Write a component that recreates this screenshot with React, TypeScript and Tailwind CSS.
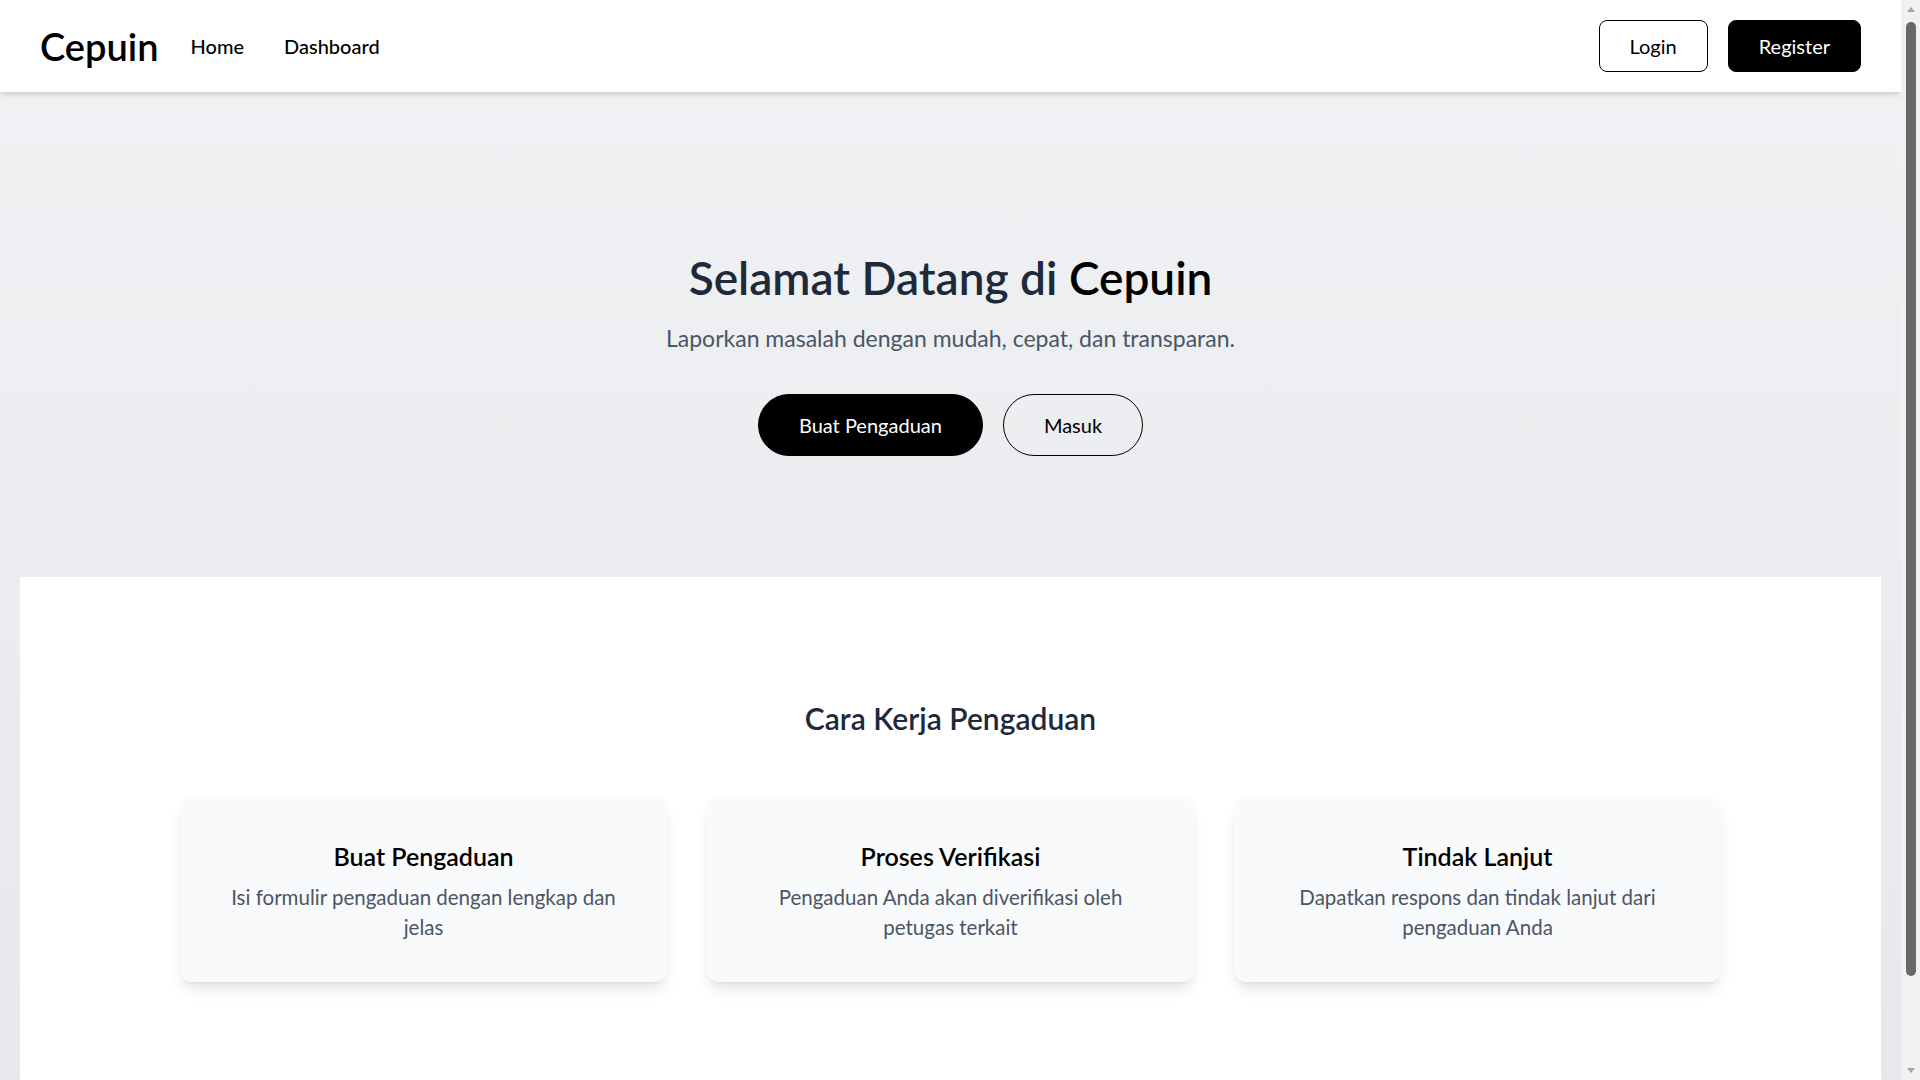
const steps = [
  {
    title: "Buat Pengaduan",
    desc: "Isi formulir pengaduan dengan lengkap dan jelas",
  },
  {
    title: "Proses Verifikasi",
    desc: "Pengaduan Anda akan diverifikasi oleh petugas terkait",
  },
  {
    title: "Tindak Lanjut",
    desc: "Dapatkan respons dan tindak lanjut dari pengaduan Anda",
  },
];

function Navbar() {
  return (
    <nav className="relative z-10 h-[92px] bg-white shadow-md flex items-center justify-between pl-10 pr-10">
      <div className="flex items-center">
        <span className="text-[38px] font-semibold text-black">Cepuin</span>
        <div className="ml-8 flex items-center gap-10 text-xl font-medium text-black">
          <a href="#">Home</a>
          <a href="#">Dashboard</a>
        </div>
      </div>
      <div className="flex items-center gap-5">
        <button className="border border-black rounded-lg px-[30px] py-[11px] text-xl text-black bg-white">
          Login
        </button>
        <button className="border border-black rounded-lg px-[30px] py-[11px] text-xl text-white bg-black">
          Register
        </button>
      </div>
    </nav>
  );
}

// stand-in for the browser's vertical scrollbar seen in the screenshot
function Scrollbar() {
  return (
    <div className="w-[19px] h-screen bg-[#f1f1f1] flex flex-col items-center">
      <svg width="10" height="16" viewBox="0 0 10 16" className="mt-[2px]">
        <polygon points="1,10 5,5 9,10" fill="#a3a3a3" />
      </svg>
      <div className="mt-[4px] w-[10px] h-[954px] rounded-full bg-[#686868]" />
      <div className="flex-1" />
      <svg width="10" height="16" viewBox="0 0 10 16" className="mb-[2px]">
        <polygon points="1,6 5,11 9,6" fill="#a3a3a3" />
      </svg>
    </div>
  );
}

export default function App() {
  return (
    <div className="flex h-screen overflow-hidden font-['Lato','Open_Sans',sans-serif]">
      <div className="flex-1 min-w-0 h-screen overflow-hidden">
        <div className="bg-gradient-to-b from-[#f1f2f4] to-gray-200 pb-5">
          <Navbar />

          <section className="pt-[162px] pb-[121px] flex flex-col items-center text-center">
            <h1 className="text-[46px] leading-[48px] font-semibold text-gray-800">
              Selamat Datang di <span className="text-black">Cepuin</span>
            </h1>
            <p className="mt-5 text-[23px] leading-8 text-gray-600">
              Laporkan masalah dengan mudah, cepat, dan transparan.
            </p>
            <div className="mt-10 flex items-center gap-5">
              <button className="border border-black bg-black text-white rounded-full px-10 py-4 text-xl">
                Buat Pengaduan
              </button>
              <button className="border border-black text-black rounded-full px-10 py-4 text-xl">
                Masuk
              </button>
            </div>
          </section>

          <section className="mx-5 bg-white px-40 pt-[123px] pb-32">
            <h2 className="text-3xl font-semibold text-gray-800 text-center">
              Cara Kerja Pengaduan
            </h2>
            <div className="mt-[61px] grid grid-cols-3 gap-10">
              {steps.map((s) => (
                <div
                  key={s.title}
                  className="bg-gray-50 rounded-xl shadow-lg px-10 pt-[43px] pb-10 text-center"
                >
                  <h3 className="text-[25px] leading-8 font-semibold text-black">{s.title}</h3>
                  <p className="mt-2.5 text-[20.5px] leading-[30px] text-gray-600">{s.desc}</p>
                </div>
              ))}
            </div>
          </section>
        </div>
      </div>
      <Scrollbar />
    </div>
  );
}
